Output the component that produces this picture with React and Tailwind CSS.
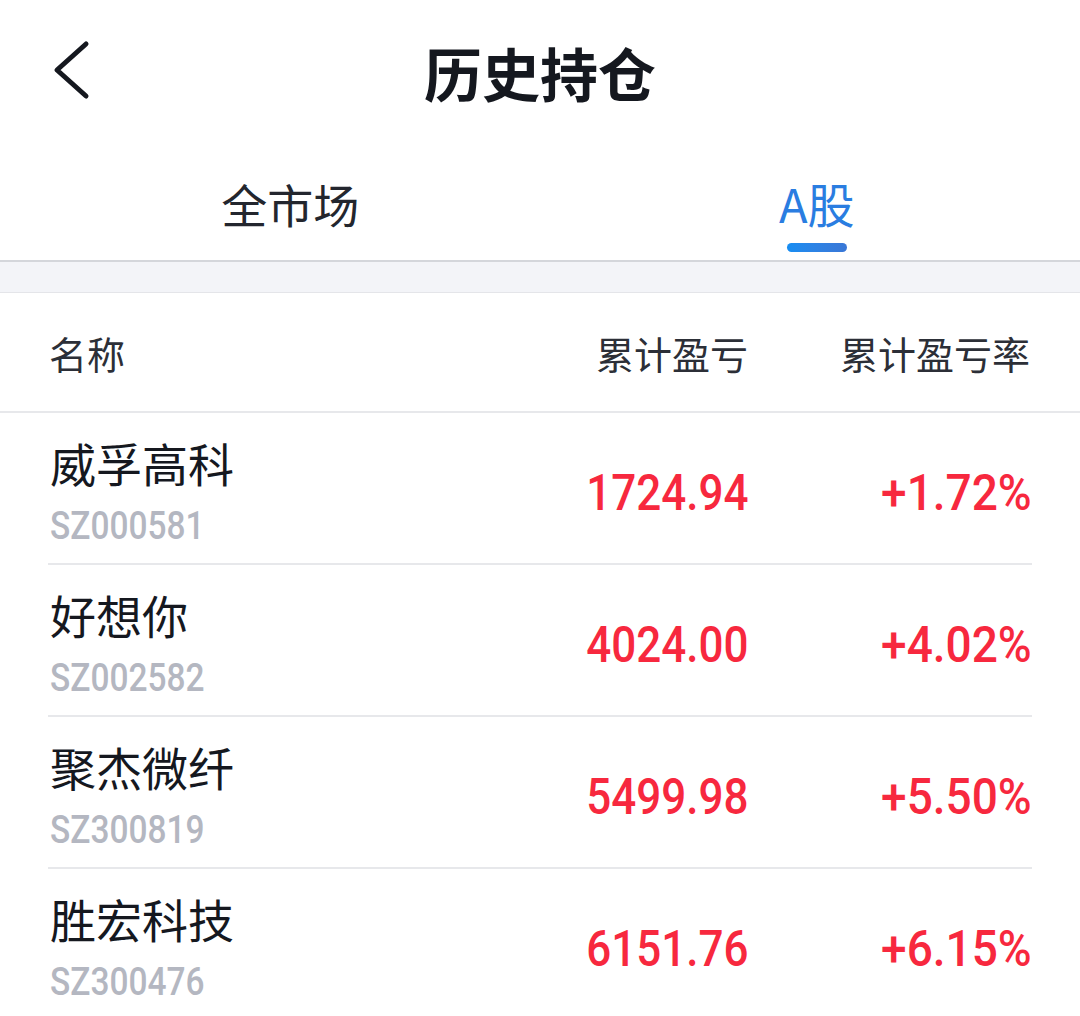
import React from "react";

const rows = [
  { name: "威孚高科", code: "SZ000581", pnl: "1724.94", rate: "+1.72%" },
  { name: "好想你", code: "SZ002582", pnl: "4024.00", rate: "+4.02%" },
  { name: "聚杰微纤", code: "SZ300819", pnl: "5499.98", rate: "+5.50%" },
  { name: "胜宏科技", code: "SZ300476", pnl: "6151.76", rate: "+6.15%" },
];

const cjk = { fontFamily: '"Noto Sans CJK SC", "Noto Sans", sans-serif' };
const num = { fontFamily: 'Roboto, "Noto Sans", sans-serif' };

export default function App() {
  return (
    <div className="w-[1080px] h-[1016px] bg-white overflow-hidden" style={cjk}>
      {/* Nav bar */}
      <div className="h-[140px] grid grid-cols-[1fr_auto_1fr] items-center">
        <div className="pl-[50px] flex items-center">
          <svg width="44" height="60" viewBox="0 0 44 60" fill="none">
            <polyline
              points="36,4 7,30 36,56"
              stroke="#15181f"
              strokeWidth="5"
              strokeLinecap="round"
              strokeLinejoin="round"
            />
          </svg>
        </div>
        <div className="text-[58px] leading-[70px] font-bold text-[#15181f] mt-[4px]">历史持仓</div>
        <div />
      </div>

      {/* Tabs */}
      <div className="h-[122px] border-b-2 border-[#d4d6db] flex pl-[27px]">
        <div className="w-[528px] flex flex-col items-center pt-[35px]">
          <div className="text-[46px] leading-[56px] text-[#23262e]">全市场</div>
        </div>
        <div className="w-[528px] flex flex-col items-center pt-[35px]">
          <div className="text-[47px] leading-[56px] text-[#2a7de1]">A股</div>
          <div className="mt-[12px] h-[9px] w-[60px] rounded-full bg-gradient-to-r from-[#158df2] to-[#3a77d6]" />
        </div>
      </div>

      {/* Gray band */}
      <div className="h-[31px] bg-[#f3f4f8] border-b border-[#e4e5e9]" />

      {/* Header row */}
      <div className="h-[120px] border-b-2 border-[#e7e8eb] flex items-center pr-[50px] text-[38px] text-[#2c2f37]">
        <div className="flex-1 pl-[49px]">名称</div>
        <div className="w-[260px] text-right">累计盈亏</div>
        <div className="w-[282px] text-right">累计盈亏率</div>
      </div>

      {/* Rows */}
      {rows.map((r, i) => (
        <div key={i} className="mx-[48px] h-[152px] border-b-2 border-[#e7e8eb] flex items-center pt-[10px]">
          <div className="flex-1 pl-[2px] flex flex-col">
            <div className="text-[46px] leading-[56px] text-[#15181f]">{r.name}</div>
            <div className="mt-[16px] leading-[40px]">
              <span
                className="inline-block origin-left scale-x-[0.88] text-[38px] font-medium text-[#b4b7c1]"
                style={num}
              >
                {r.code}
              </span>
            </div>
          </div>
          <div className="w-[260px] text-right">
            <span
              className="inline-block origin-right scale-x-[0.88] text-[50px] leading-[60px] font-medium text-[#f7283e]"
              style={num}
            >
              {r.pnl}
            </span>
          </div>
          <div className="w-[284px] text-right">
            <span
              className="inline-block origin-right scale-x-[0.92] text-[50px] leading-[60px] font-medium text-[#f7283e]"
              style={num}
            >
              {r.rate}
            </span>
          </div>
        </div>
      ))}
    </div>
  );
}
